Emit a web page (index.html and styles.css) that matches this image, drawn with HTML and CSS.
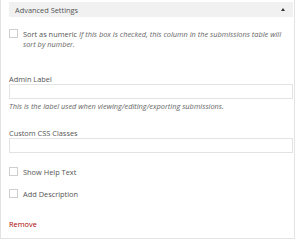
FILE: index.html
```html
<!DOCTYPE html>
<html lang="en">
<head>
    <meta charset="UTF-8">
    <title>Advanced Settings</title>
    <link rel="stylesheet" href="styles.css">
</head>
<body>
    <div class="panel">
        <div class="panel-head">
            <span>Advanced Settings</span>
            <span class="arrow"></span>
        </div>

        <div class="check-row first">
            <span class="box"></span>
            <p>Sort as numeric <em>If this box is checked, this column in the submissions table will sort by number.</em></p>
        </div>

        <div class="text-field admin">
            <label for="admin">Admin Label</label>
            <input type="text" id="admin">
            <p class="help">This is the label used when viewing/editing/exporting submissions.</p>
        </div>

        <div class="text-field css-field">
            <label for="css">Custom CSS Classes</label>
            <input type="text" id="css">
        </div>

        <div class="check-row help-row">
            <span class="box"></span>
            <p>Show Help Text</p>
        </div>

        <div class="check-row desc-row">
            <span class="box"></span>
            <p>Add Description</p>
        </div>

        <a class="remove" href="#">Remove</a>
    </div>
</body>
</html>
```

FILE: styles.css
```css
body {
    margin: 0;
    font-family: "Open Sans", sans-serif;
    font-size: 7.4px;
    color: #555;
    background: #fff;
}

.panel {
    width: 284px;
    height: 236px;
    padding: 2px 1px 0 8px;
    border: 1px solid #e3e3e3;
    border-top: none;
    background: #fff;
}

.panel-head {
    display: flex;
    align-items: center;
    justify-content: space-between;
    height: 15px;
    padding: 0 8px 0 6px;
    background: #f1f1f1;
    color: #555;
    font-size: 7.4px;
}

.arrow {
    width: 0;
    height: 0;
    border-left: 2px solid transparent;
    border-right: 2px solid transparent;
    border-bottom: 3px solid #333;
}

.check-row {
    display: flex;
    align-items: flex-start;
    gap: 5px;
}

.check-row p {
    margin: 0;
    line-height: 10px;
}

.check-row em {
    color: #666;
}

.box {
    flex: none;
    width: 7px;
    height: 7px;
    border: 1px solid #cfcfcf;
    background: #fff;
}

.first {
    margin-top: 12px;
}

.text-field label {
    display: block;
    line-height: 8px;
}

.text-field input {
    display: block;
    width: 282px;
    height: 13px;
    margin: 1px 0 0;
    padding: 0;
    border: 1px solid #e3e3e3;
}

.help {
    margin: 3px 0 0;
    line-height: 8px;
    font-style: italic;
    color: #666;
}

.admin {
    margin-top: 26px;
}

.css-field {
    margin-top: 19px;
}

.help-row {
    margin-top: 14px;
}

.desc-row {
    margin-top: 12px;
}

.remove {
    display: block;
    margin-top: 20px;
    line-height: 10px;
    color: #a00;
    text-decoration: none;
}
```
